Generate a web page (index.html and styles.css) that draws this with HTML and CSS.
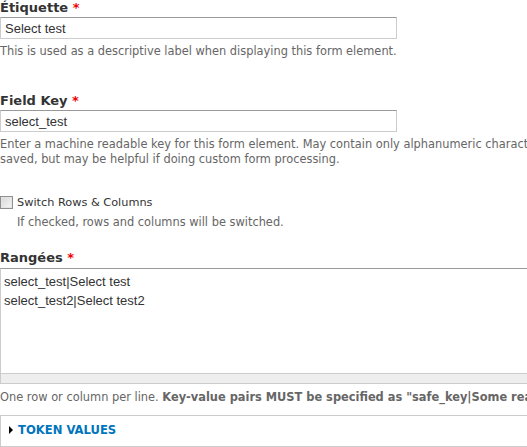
FILE: index.html
```html
<!DOCTYPE html>
<html lang="fr">
<head>
<meta charset="utf-8">
<title>Form</title>
<link rel="stylesheet" href="styles.css">
</head>
<body>
<div class="page">
  <div class="item item-label">
    <label class="lbl">Étiquette <span class="req">*</span></label>
    <input class="text" type="text" value="Select test">
    <div class="desc">This is used as a descriptive label when displaying this form element.</div>
  </div>

  <div class="item item-key">
    <label class="lbl">Field Key <span class="req">*</span></label>
    <input class="text" type="text" value="select_test">
    <div class="desc nowrap">Enter a machine readable key for this form element. May contain only alphanumeric characters and underscores. This key will be used as the name attribute of the form element. This value has no effect on the way data is<br>saved, but may be helpful if doing custom form processing.</div>
  </div>

  <div class="item item-check">
    <div class="check-row">
      <span class="checkbox"></span>
      <span class="check-label">Switch Rows &amp; Columns</span>
    </div>
    <div class="desc check-desc">If checked, rows and columns will be switched.</div>
  </div>

  <div class="item item-rows">
    <label class="lbl">Rangées <span class="req">*</span></label>
    <div class="area-wrap">
      <textarea class="area">select_test|Select test
select_test2|Select test2</textarea>
      <div class="grippie"></div>
    </div>
    <div class="desc nowrap">One row or column per line. <strong>Key-value pairs MUST be specified as "safe_key|Some readable option".</strong></div>
  </div>

  <div class="fieldset">
    <span class="tri"></span>
    <span class="legend">Token values</span>
  </div>
</div>
</body>
</html>
```

FILE: styles.css
```css
html, body {
  margin: 0;
  padding: 0;
  background: #fff;
  overflow: hidden;
}
.page {
  width: 527px;
  height: 447px;
  overflow: hidden;
  font-family: "DejaVu Sans", Verdana, sans-serif;
  color: #333;
}
.item {
  display: flex;
  flex-direction: column;
  align-items: flex-start;
}
.lbl {
  display: block;
  font-weight: bold;
  font-size: 13px;
  line-height: 16px;
  color: #333;
  margin: 0;
}
.req {
  color: #e00;
}
.text {
  box-sizing: border-box;
  width: 397px;
  height: 22px;
  margin: 1px 0 0 0;
  padding: 1px 4px 0;
  border: 1px solid #ccc;
  border-top-color: #999;
  font-family: "Liberation Sans", Arial, sans-serif;
  font-size: 13px;
  color: #333;
  outline: none;
}
.desc {
  font-size: 11.4px;
  line-height: 15px;
  color: #666;
  margin-top: 5px;
}
.nowrap {
  white-space: nowrap;
}
.item-key {
  margin-top: 34px;
}
.item-check {
  margin-top: 27px;
}
.check-row {
  display: flex;
  align-items: center;
  gap: 4px;
  height: 16px;
}
.checkbox {
  box-sizing: border-box;
  width: 13px;
  height: 13px;
  border: 1px solid #8f8f8f;
  background: linear-gradient(135deg, #d8d8d8, #f6f6f6);
  box-shadow: inset 0 0 0 1px #e4e4e4;
}
.check-label {
  font-size: 11.3px;
  color: #333;
}
.check-desc {
  margin-left: 17px;
  margin-top: 5px;
}
.item-rows {
  margin-top: 20px;
}
.area-wrap {
  width: 800px;
  margin-top: 2px;
}
.area {
  display: block;
  box-sizing: border-box;
  width: 800px;
  height: 106px;
  margin: 0;
  padding: 3px 3px;
  border: 1px solid #ccc;
  border-top-color: #999;
  font-family: "Liberation Sans", Arial, sans-serif;
  font-size: 13px;
  line-height: 19px;
  color: #333;
  resize: none;
  outline: none;
}
.grippie {
  box-sizing: border-box;
  height: 10px;
  background: #eee;
  border: 1px solid #ccc;
  border-top: 0;
}
.item-rows .desc {
  margin-top: 6px;
}
.fieldset {
  box-sizing: border-box;
  width: 800px;
  height: 32px;
  margin-top: 10px;
  border: 1px solid #ccc;
  display: flex;
  align-items: center;
  padding: 0 0 2px 8px;
  gap: 5px;
}
.tri {
  width: 0;
  height: 0;
  border-top: 4px solid transparent;
  border-bottom: 4px solid transparent;
  border-left: 4px solid #000;
}
.legend {
  font-weight: bold;
  font-size: 11.6px;
  text-transform: uppercase;
  color: #0074bd;
}
```
